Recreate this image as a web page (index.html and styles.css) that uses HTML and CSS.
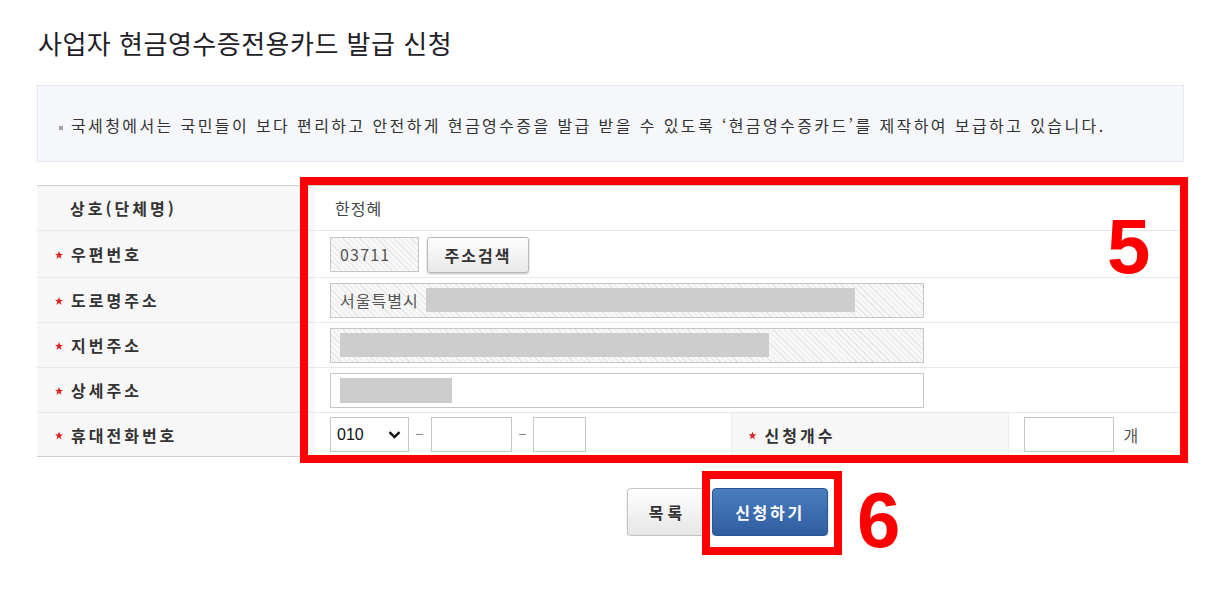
FILE: index.html
```html
<!DOCTYPE html>
<html lang="ko">
<head>
    <meta charset="UTF-8">
    <title>사업자 현금영수증전용카드 발급 신청</title>
    <link rel="stylesheet" href="styles.css">
</head>
<body>

<div class="page">
    <h2 class="title">사업자 현금영수증전용카드 발급 신청</h2>

    <div class="notice">
        <p><span class="bullet"></span>국세청에서는 국민들이 보다 편리하고 안전하게 현금영수증을 발급 받을 수 있도록 ‘현금영수증카드’를 제작하여 보급하고 있습니다.</p>
    </div>

    <table class="form">
        <colgroup>
            <col class="c1">
            <col class="c2">
            <col class="c3">
            <col class="c4">
        </colgroup>
        <tr>
            <th><span class="nostar"></span>상호(단체명)</th>
            <td colspan="3"><span class="value">한정혜</span></td>
        </tr>
        <tr class="tall">
            <th><span class="star"></span>우편번호</th>
            <td colspan="3">
                <div class="line">
                    <div class="field readonly zip">03711</div>
                    <a class="btn-small">주소검색</a>
                </div>
            </td>
        </tr>
        <tr>
            <th><span class="star"></span>도로명주소</th>
            <td colspan="3">
                <div class="field readonly wide">서울특별시<span class="hide road"></span></div>
            </td>
        </tr>
        <tr>
            <th><span class="star"></span>지번주소</th>
            <td colspan="3">
                <div class="field readonly wide"><span class="hide jibun"></span></div>
            </td>
        </tr>
        <tr>
            <th><span class="star"></span>상세주소</th>
            <td colspan="3">
                <div class="field wide"><span class="hide detail"></span></div>
            </td>
        </tr>
        <tr class="last">
            <th><span class="star"></span>휴대전화번호</th>
            <td>
                <div class="line">
                    <div class="select">010
                        <svg width="13" height="8" viewBox="0 0 13 8"><path d="M1.5 1.2 L6.5 6 L11.5 1.2" fill="none" stroke="#111" stroke-width="2.4"/></svg>
                    </div>
                    <span class="dash"></span>
                    <div class="field tel2"></div>
                    <span class="dash dash2"></span>
                    <div class="field tel3"></div>
                </div>
            </td>
            <th class="sub"><span class="star"></span>신청개수</th>
            <td class="count">
                <div class="line">
                    <div class="field qty"></div>
                    <span class="unit">개</span>
                </div>
            </td>
        </tr>
    </table>

    <div class="btns">
        <a class="btn">목록</a>
        <a class="btn btn-blue">신청하기</a>
    </div>

    <div class="mark mark5"></div>
    <span class="num num5">5</span>
    <div class="mark mark6"></div>
    <span class="num num6">6</span>
</div>

</body>
</html>
```

FILE: styles.css
```css
body {
    background: #fff;
    color: #333;
    font-family: "Noto Sans CJK KR", sans-serif;
    margin: 0;
    padding: 0;
}
.page {
    padding: 28px 0 0 37px;
    width: 1147px;
}
.title {
    color: #221d26;
    font-size: 26px;
    font-weight: normal;
    letter-spacing: 0.5px;
    line-height: 30px;
    margin: 0;
    padding-left: 1px;
}
.notice {
    background: #f5f7fb;
    border: 1px solid #e3e7ee;
    margin-top: 27px;
    padding: 29px 0 26px 0;
}
.notice p {
    color: #333;
    font-size: 16px;
    letter-spacing: 2.4px;
    line-height: 20px;
    margin: 0;
    padding-left: 21px;
}
.bullet {
    background: #a5a5a5;
    display: inline-block;
    height: 4px;
    margin-right: 8px;
    vertical-align: middle;
    width: 4px;
}
.form {
    border-collapse: collapse;
    border-top: 1px solid #cfcfcf;
    margin-top: 23px;
    table-layout: fixed;
    width: 1147px;
}
.c1 { width: 278px; }
.c2 { width: 416px; }
.c3 { width: 277px; }
.c4 { width: 176px; }
.form th,
.form td {
    border-bottom: 1px solid #e8e8e8;
    height: 44px;
    padding: 0;
    vertical-align: middle;
}
.form tr.tall th,
.form tr.tall td {
    height: 46px;
}
.form tr.last th,
.form tr.last td {
    border-bottom: 1px solid #cfcfcf;
    height: 43px;
}
.form th {
    background: #f7f7f7;
    color: #333;
    font-size: 16px;
    font-weight: bold;
    letter-spacing: 3px;
    padding-left: 18px;
    text-align: left;
}
.form th.sub {
    border-left: 1px solid #ececec;
    border-right: 1px solid #ececec;
    padding-left: 17px;
}
.form td {
    padding-left: 15px;
}
.star {
    background: #d22;
    clip-path: polygon(50% 0, 63% 35%, 100% 38%, 70% 60%, 80% 100%, 50% 75%, 20% 100%, 30% 60%, 0 38%, 37% 35%);
    display: inline-block;
    height: 8px;
    margin-right: 8px;
    vertical-align: 2px;
    width: 8px;
}
.nostar {
    display: inline-block;
    width: 15px;
}
.value {
    color: #444;
    font-size: 16px;
    letter-spacing: 1px;
    padding-left: 5px;
}
.line {
    align-items: center;
    display: flex;
}
.field {
    align-items: center;
    background: #fff;
    border: 1px solid #c6c6c6;
    box-sizing: border-box;
    color: #555;
    display: flex;
    font-size: 16px;
    height: 35px;
    letter-spacing: 1px;
    padding-left: 9px;
}
.field.readonly {
    background: repeating-linear-gradient(45deg, #f8f8f8 0, #f8f8f8 3px, #e6e6e6 3px, #e6e6e6 4px);
}
.zip {
    letter-spacing: 1.2px;
    width: 89px;
}
.wide {
    width: 594px;
}
.hide {
    background: #cdcdcd;
    display: inline-block;
    height: 24px;
}
.road {
    margin-left: 7px;
    width: 429px;
}
.jibun {
    width: 429px;
}
.detail {
    height: 25px;
    width: 112px;
}
.btn-small {
    background: linear-gradient(#fff, #e8e8e8);
    border: 1px solid #b8b8b8;
    border-radius: 3px;
    box-shadow: 0 1px 2px rgba(0, 0, 0, .25);
    box-sizing: border-box;
    color: #333;
    display: block;
    font-size: 16px;
    font-weight: bold;
    height: 36px;
    letter-spacing: 2px;
    line-height: 34px;
    margin-left: 8px;
    margin-top: 1px;
    text-align: center;
    width: 102px;
}
.select {
    align-items: center;
    background: #fff;
    border: 1px solid #c6c6c6;
    box-sizing: border-box;
    color: #111;
    display: flex;
    font-family: "Liberation Sans", sans-serif;
    font-size: 16px;
    height: 35px;
    justify-content: space-between;
    padding: 0 7px 0 6px;
    width: 79px;
}
.dash {
    display: block;
    height: 1px;
    margin: 0 8px 0 7px;
    background: #888;
    width: 7px;
}
.dash2 {
    margin: 0 7px 0 7px;
}
.tel2 {
    width: 81px;
}
.tel3 {
    width: 53px;
}
.qty {
    width: 90px;
}
.unit {
    color: #555;
    font-size: 16px;
    margin-left: 10px;
}
.btns {
    display: flex;
    margin-top: 31px;
    padding-left: 590px;
}
.btn {
    background: linear-gradient(#fff, #e6e6e6);
    border: 1px solid #c4c4c4;
    border-radius: 4px;
    box-shadow: 0 1px 2px rgba(0, 0, 0, .2);
    box-sizing: border-box;
    color: #333;
    display: block;
    font-size: 16px;
    font-weight: bold;
    height: 48px;
    letter-spacing: 4px;
    line-height: 46px;
    margin-right: 4px;
    text-align: center;
    width: 81px;
}
.btn-blue {
    background: linear-gradient(#4b7dc1, #2f5da0);
    border-color: #2c5592;
    color: #fff;
    letter-spacing: 2.7px;
    width: 116px;
}
.mark {
    border: 8px solid #f00;
    box-sizing: border-box;
    position: absolute;
}
.mark5 {
    height: 286px;
    left: 300px;
    top: 177px;
    width: 888px;
}
.mark6 {
    height: 84px;
    left: 702px;
    top: 471px;
    width: 140px;
}
.num {
    color: #f00;
    font-family: "Liberation Sans", sans-serif;
    font-size: 78px;
    font-weight: bold;
    line-height: 78px;
    position: absolute;
}
.num5 {
    left: 1107px;
    top: 207px;
}
.num6 {
    left: 857px;
    top: 481px;
}
```
